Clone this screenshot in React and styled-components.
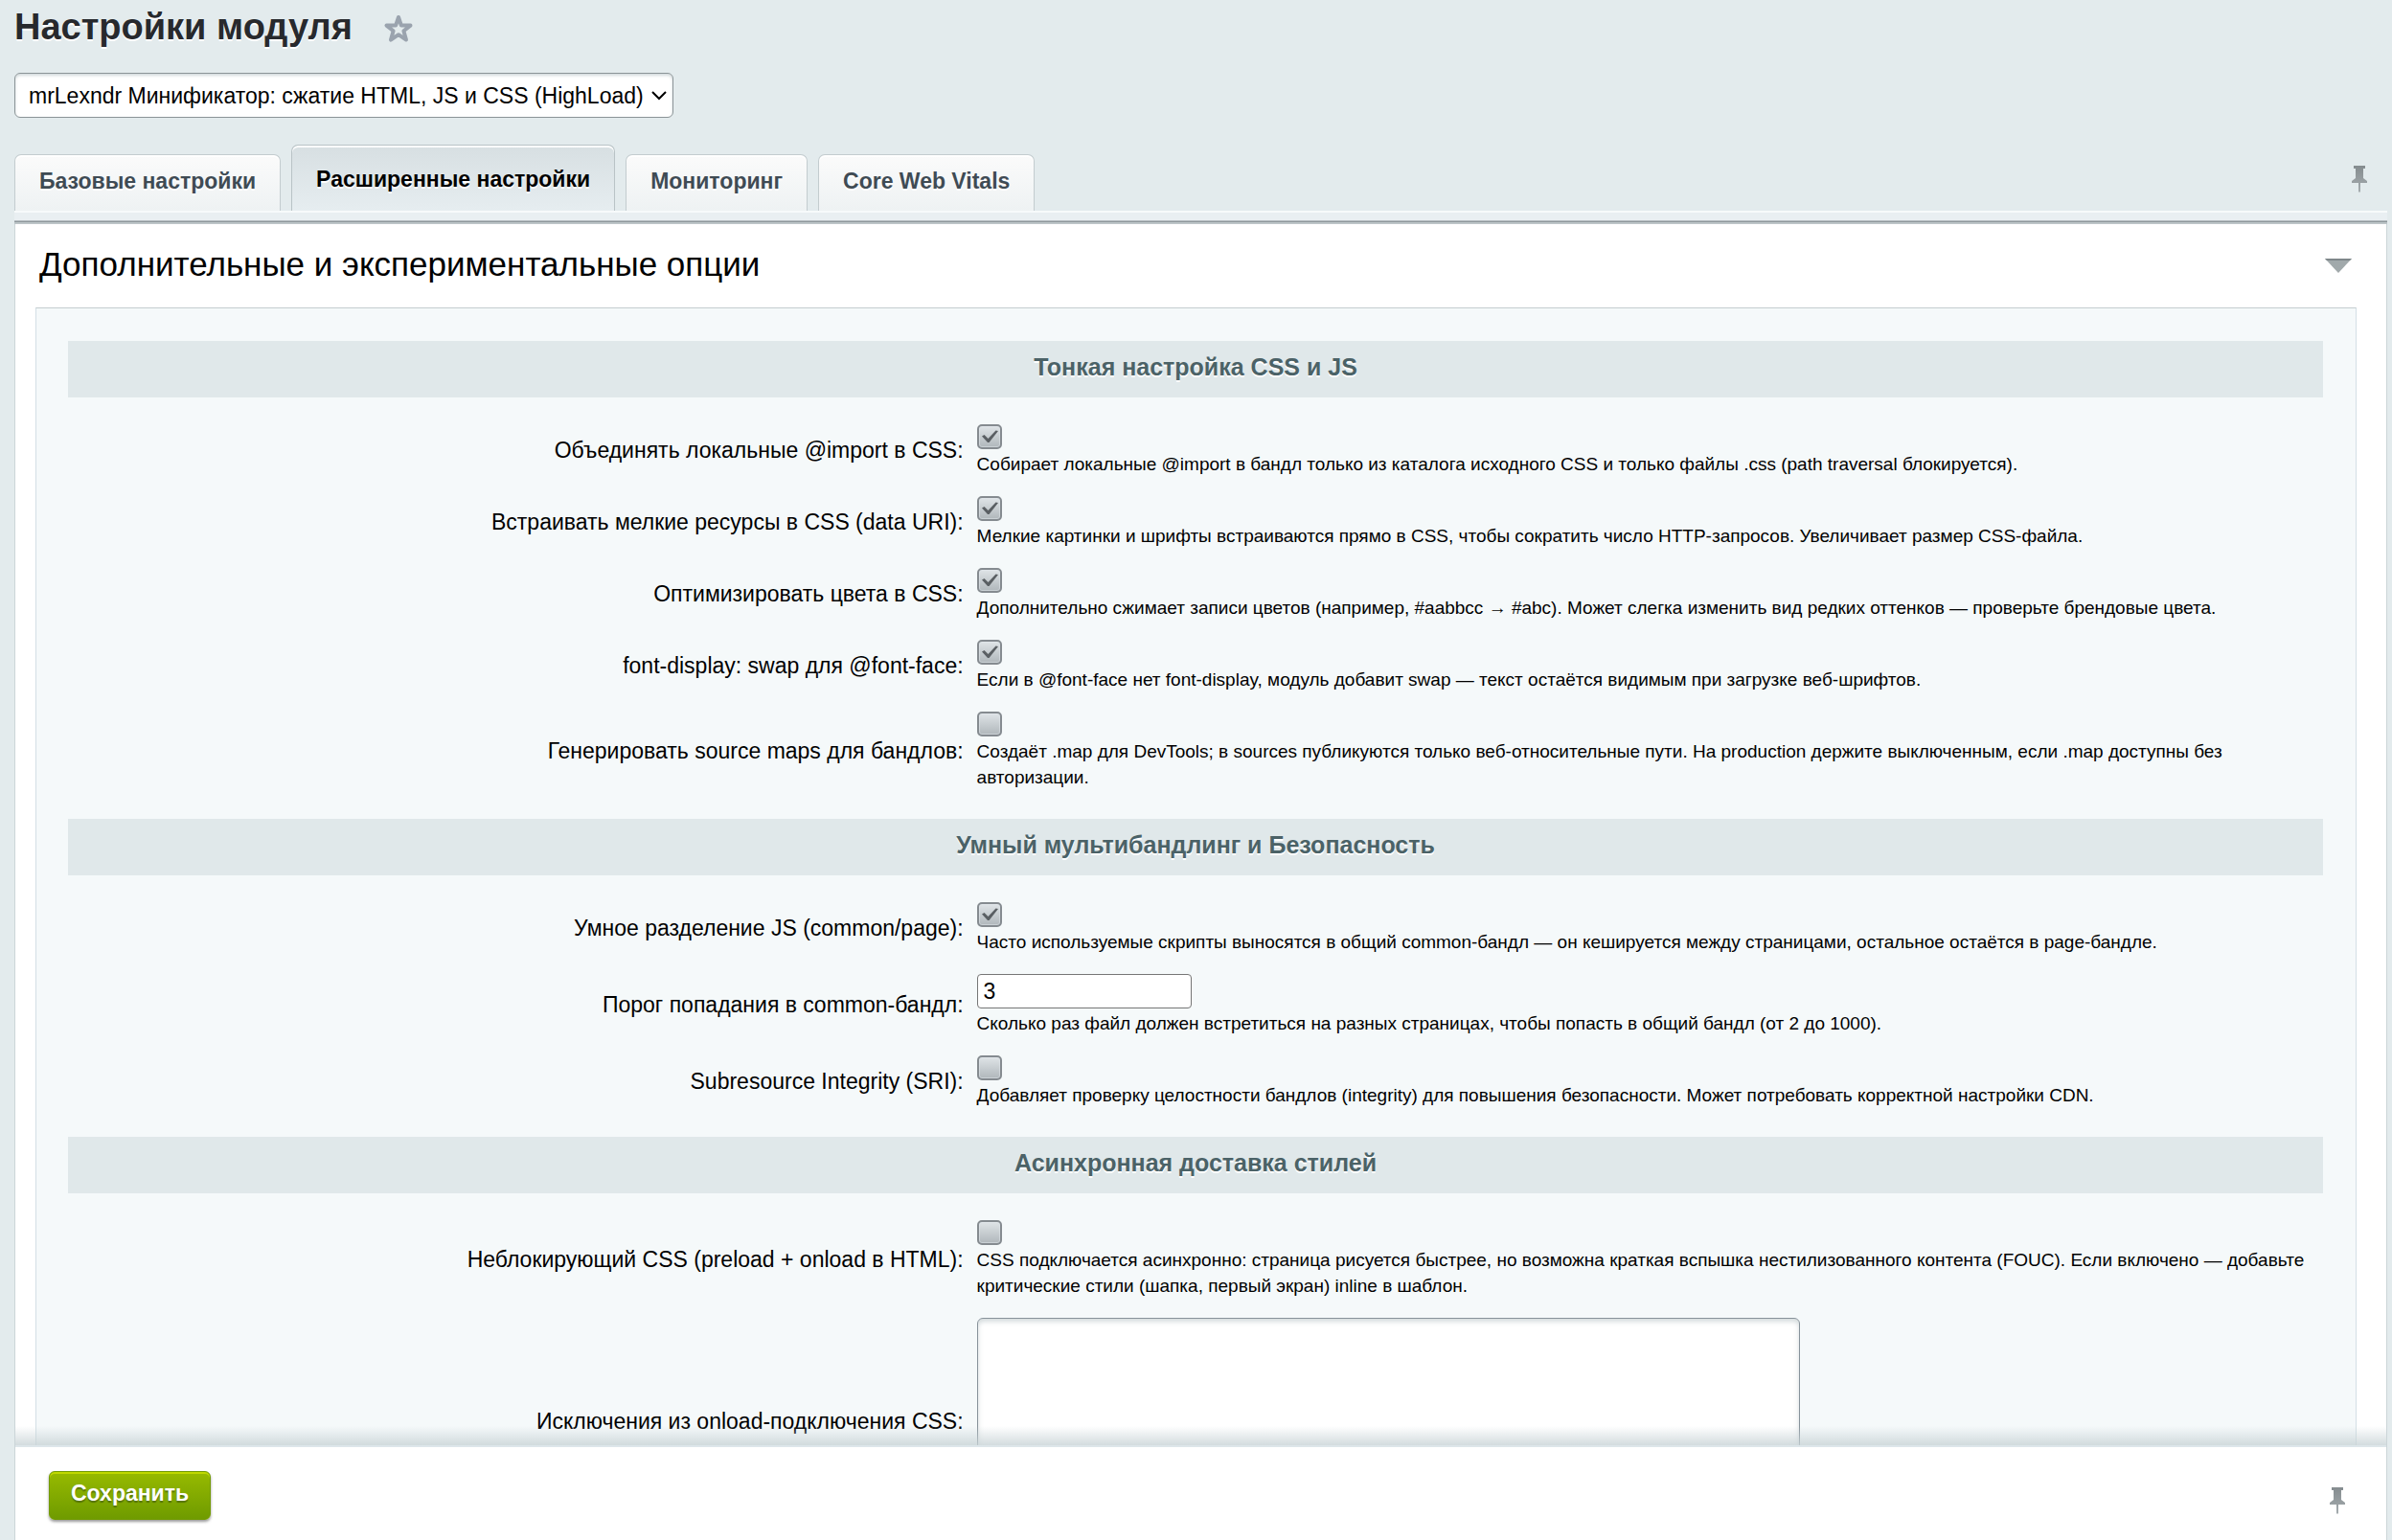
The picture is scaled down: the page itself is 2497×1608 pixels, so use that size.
import React, { useState } from 'react';
import styled, { createGlobalStyle } from 'styled-components';

const GlobalStyle = createGlobalStyle`
* {
  box-sizing: border-box;
}
body {
  margin: 0;
  background: #e3ebed;
  color: #000;
  font-family: "Liberation Sans", Arial, sans-serif;
  font-size: 23px;
}
button, input, select, textarea {
  font-family: inherit;
  font-size: inherit;
}
`

const Page = styled.div`
  display: flex;
  flex-direction: column;
  height: 100vh;
  overflow: hidden;
  padding: 0 5px 0 15px;
`

const TitleRow = styled.header`
  display: flex;
  align-items: center;
  gap: 32px;
  height: 56px;
  flex: none;
`

const Title = styled.h1`
  margin: 0;
  font-size: 38px;
  line-height: 56px;
  color: #27292d;
  text-shadow: 0 2px 0 #fff;
`

const IconButton = styled.button`
  display: flex;
  padding: 0;
  border: 0;
  background: none;
`

const StarButton = styled(IconButton)`
  padding-top: 4px;
`

const ModuleSelect = styled.div`
  display: grid;
  align-items: center;
  width: max-content;
  margin-top: 20px;
  flex: none;

  select, svg {
    grid-area: 1 / 1;
  }
  svg {
    justify-self: end;
    margin-right: 6px;
    pointer-events: none;
  }
  select {
    appearance: none;
    height: 47px;
    padding: 0 30px 0 14px;
    border: 1px solid #8b9497;
    border-radius: 6px;
    background: #fff;
    box-shadow: inset 0 2px 3px rgba(130, 150, 155, 0.35);
    color: #000;
  }
`

const TabsRow = styled.div`
  display: flex;
  align-items: flex-end;
  gap: 11px;
  height: 70px;
  margin-top: 27px;
  flex: none;
`

const Tab = styled.button`
  height: ${props => props.$active ? 69 : 59}px;
  padding: ${props => props.$active ? '2px 25px 0' : '0 25px 4px'};
  border: 1px solid ${props => props.$active ? '#b9c3c6' : '#c3cccf'};
  border-bottom: 0;
  border-radius: 7px 7px 0 0;
  background: ${props => props.$active
    ? 'linear-gradient(#d7dfe2, #e6edf0)'
    : 'linear-gradient(#fbfbfb, #eef2f3)'};
  box-shadow: inset 0 2px 0 #fff;
  color: ${props => props.$active ? '#000' : '#3f4b54'};
  font-weight: bold;
  text-shadow: 0 2px 0 #fff;
`

const TabsPin = styled.div`
  margin-left: auto;
  padding: 0 20px 18px 0;
`

const TabsLine = styled.div`
  height: 14px;
  flex: none;
  border-top: 2px solid #f7fafb;
  background: linear-gradient(#e9eff2 8px, #b4bcc0 8px, #b4bcc0 9px, #8f989c 9px, #8f989c 10px, #bcc4c7 10px);
`

const Card = styled.main`
  flex: 1;
  min-height: 0;
  overflow: hidden;
  padding: 0 31px 0 21px;
  border: solid #cbd5d8;
  border-width: 0 1px;
  background: #fff;
`

const CardHead = styled.div`
  display: flex;
  align-items: center;
  justify-content: space-between;
  height: 87px;
  padding: 0 5px 0 4px;
`

const CardTitle = styled.h2`
  margin: 0;
  padding-bottom: 3px;
  font-size: 35px;
  font-weight: normal;
`

const Panel = styled.form`
  padding: 34px 34px 0 33px;
  border: 1px solid #d3dfe5;
  border-top-color: #c4cdd0;
  background: #f5f9fa;
`

const Section = styled.section`
  & + & {
    margin-top: 21px;
  }
`

const SectionTitle = styled.h3`
  height: 59px;
  margin: 0 0 17px;
  background: #e0e8ea;
  color: #4b6267;
  font-size: 25px;
  line-height: 54px;
  text-align: center;
  text-shadow: 0 2px 0 #fff;
`

const Row = styled.div`
  display: grid;
  grid-template-columns: 2fr 3fr;
  align-items: center;
  padding: 11px 0 9px;
`

const Label = styled.label`
  padding-right: 7px;
  text-align: right;
`

const Field = styled.div`
  display: flex;
  flex-direction: column;
  align-items: flex-start;
  gap: 2px;
  padding: 0 7px;
`

const Note = styled.small`
  font-size: 19px;
  line-height: 27px;
`

const CheckWrap = styled.span`
  display: grid;

  input, svg {
    grid-area: 1 / 1;
  }
  svg {
    pointer-events: none;
  }
  input {
    appearance: none;
    width: 26px;
    height: 26px;
    margin: 0;
    border: 2px solid #858b90;
    border-radius: 5px;
    background: linear-gradient(#dfe4e7, #b0b7bb);
    box-shadow: inset 0 0 0 1px rgba(225, 232, 235, 0.5);
  }
`

const NumberInput = styled.input`
  width: 224px;
  height: 36px;
  padding: 0 6px;
  border: 1px solid #767676;
  border-radius: 4px;
  background: #fff;
`

const TextArea = styled.textarea`
  width: 859px;
  max-width: 100%;
  height: 216px;
  border: 1px solid #87929a;
  border-radius: 6px;
  background: #fff;
  box-shadow: inset 0 3px 5px rgba(130, 150, 155, 0.35);
  resize: none;
`

const Footer = styled.footer`
  position: relative;
  display: flex;
  align-items: flex-start;
  justify-content: space-between;
  height: 97px;
  flex: none;
  padding: 25px 42px 0 35px;
  border: solid #cbd5d8;
  border-width: 0 1px;
  background: #fff;

  &::before {
    content: "";
    position: absolute;
    left: 0;
    right: 0;
    bottom: 100%;
    height: 20px;
    border-bottom: 2px solid #dde6ea;
    background: linear-gradient(rgba(200, 211, 214, 0), rgba(200, 211, 214, 0.8));
    pointer-events: none;
  }
`

const SaveButton = styled.button`
  height: 51px;
  padding: 0 22px 4px;
  border: 1px solid #739a04;
  border-radius: 6px;
  background: linear-gradient(#97ba00, #6f9b00);
  box-shadow: inset 0 2px 0 #bfd800, 0 2px 3px rgba(0, 0, 0, 0.4);
  color: #fff;
  font-weight: bold;
  text-shadow: 0 2px 1px rgba(70, 95, 0, 0.7);
`

const FooterPin = styled.div`
  padding-top: 16px;
`

const sections = [
  {
    title: 'Тонкая настройка CSS и JS',
    rows: [
      { id: 'css_import', label: 'Объединять локальные @import в CSS:', type: 'checkbox', value: true, note: 'Собирает локальные @import в бандл только из каталога исходного CSS и только файлы .css (path traversal блокируется).' },
      { id: 'css_data_uri', label: 'Встраивать мелкие ресурсы в CSS (data URI):', type: 'checkbox', value: true, note: 'Мелкие картинки и шрифты встраиваются прямо в CSS, чтобы сократить число HTTP-запросов. Увеличивает размер CSS-файла.' },
      { id: 'css_colors', label: 'Оптимизировать цвета в CSS:', type: 'checkbox', value: true, note: 'Дополнительно сжимает записи цветов (например, #aabbcc → #abc). Может слегка изменить вид редких оттенков — проверьте брендовые цвета.' },
      { id: 'font_display', label: 'font-display: swap для @font-face:', type: 'checkbox', value: true, note: 'Если в @font-face нет font-display, модуль добавит swap — текст остаётся видимым при загрузке веб-шрифтов.' },
      { id: 'source_maps', label: 'Генерировать source maps для бандлов:', type: 'checkbox', value: false, note: 'Создаёт .map для DevTools; в sources публикуются только веб-относительные пути. На production держите выключенным, если .map доступны без авторизации.' },
    ],
  },
  {
    title: 'Умный мультибандлинг и Безопасность',
    rows: [
      { id: 'js_split', label: 'Умное разделение JS (common/page):', type: 'checkbox', value: true, note: 'Часто используемые скрипты выносятся в общий common-бандл — он кешируется между страницами, остальное остаётся в page-бандле.' },
      { id: 'common_limit', label: 'Порог попадания в common-бандл:', type: 'text', value: '3', note: 'Сколько раз файл должен встретиться на разных страницах, чтобы попасть в общий бандл (от 2 до 1000).' },
      { id: 'sri', label: 'Subresource Integrity (SRI):', type: 'checkbox', value: false, note: 'Добавляет проверку целостности бандлов (integrity) для повышения безопасности. Может потребовать корректной настройки CDN.' },
    ],
  },
  {
    title: 'Асинхронная доставка стилей',
    rows: [
      { id: 'css_async', label: 'Неблокирующий CSS (preload + onload в HTML):', type: 'checkbox', value: false, note: 'CSS подключается асинхронно: страница рисуется быстрее, но возможна краткая вспышка нестилизованного контента (FOUC). Если включено — добавьте критические стили (шапка, первый экран) inline в шаблон.' },
      { id: 'css_exclude', label: 'Исключения из onload-подключения CSS:', type: 'textarea', value: '' },
    ],
  },
]

const tabs = ['Базовые настройки', 'Расширенные настройки', 'Мониторинг', 'Core Web Vitals']

const StarIcon = () => (
  <svg width="32" height="32" viewBox="0 0 32 32" fill="none" stroke="#9aa3ae" strokeWidth="4" strokeLinejoin="round">
    <path d="M16 4 L18.8 12.4 L28.5 12.6 L21.4 18.3 L24 27.6 L16 22.2 L8 27.6 L10.6 18.3 L3.5 12.6 L13.2 12.4 Z" />
  </svg>
)

const PinIcon = () => (
  <svg width="18" height="30" viewBox="0 0 18 30">
    <defs>
      <linearGradient id="pin" x1="0" y1="0" x2="0" y2="1">
        <stop offset="0" stopColor="#858c8f" />
        <stop offset="1" stopColor="#a5acaf" />
      </linearGradient>
    </defs>
    <path fill="url(#pin)" d="M3 1h12v3h-2v10l4 3v2h-7v9.500h-2V19H1v-2l4-3V4H3z" />
  </svg>
)

const ArrowIcon = () => (
  <svg width="28" height="15" viewBox="0 0 28 15">
    <path fill="#a1a9ab" d="M0 0h28L14 15z" />
    <path fill="#7f878a" d="M0 0h28l-2 2H2z" />
  </svg>
)

const Checkbox = ({ id, value }) => {
  const [checked, setChecked] = useState(value)
  return (
    <CheckWrap>
      <input id={id} type="checkbox" checked={checked} onChange={e => setChecked(e.target.checked)} />
      {checked && (
        <svg width="26" height="26" viewBox="0 0 26 26">
          <path fill="#5a5f63" d="M5 12.500L7.500 11l4 4L19.500 6.500l2.500.5L12.500 19h-1.500z" />
        </svg>
      )}
    </CheckWrap>
  )
}

const Control = ({ row }) => {
  if (row.type === 'checkbox') return <Checkbox id={row.id} value={row.value} />
  if (row.type === 'textarea') return <TextArea id={row.id} defaultValue={row.value} />
  return <NumberInput id={row.id} type="text" defaultValue={row.value} />
}

const App = () => {
  const [active, setActive] = useState(1)

  return (
    <Page>
      <GlobalStyle />
      <TitleRow>
        <Title>Настройки модуля</Title>
        <StarButton type="button" aria-label="Добавить в избранное"><StarIcon /></StarButton>
      </TitleRow>

      <ModuleSelect>
        <select aria-label="Модуль">
          <option>mrLexndr Минификатор: сжатие HTML, JS и CSS (HighLoad)</option>
        </select>
        <svg width="18" height="12" viewBox="0 0 18 12" fill="none" stroke="#000" strokeWidth="2">
          <path d="M2 2l7 7 7-7" />
        </svg>
      </ModuleSelect>

      <TabsRow role="tablist">
        {tabs.map((tab, i) => (
          <Tab key={tab} type="button" role="tab" aria-selected={i === active} $active={i === active} onClick={() => setActive(i)}>
            {tab}
          </Tab>
        ))}
        <TabsPin>
          <IconButton type="button" aria-label="Закрепить вкладки"><PinIcon /></IconButton>
        </TabsPin>
      </TabsRow>
      <TabsLine />

      <Card>
        <CardHead>
          <CardTitle>Дополнительные и экспериментальные опции</CardTitle>
          <IconButton type="button" aria-label="Свернуть"><ArrowIcon /></IconButton>
        </CardHead>
        <Panel id="settings">
          {sections.map(section => (
            <Section key={section.title}>
              <SectionTitle>{section.title}</SectionTitle>
              {section.rows.map(row => (
                <Row key={row.id}>
                  <Label htmlFor={row.id}>{row.label}</Label>
                  <Field>
                    <Control row={row} />
                    {row.note && <Note>{row.note}</Note>}
                  </Field>
                </Row>
              ))}
            </Section>
          ))}
        </Panel>
      </Card>

      <Footer>
        <SaveButton type="submit" form="settings">Сохранить</SaveButton>
        <FooterPin>
          <IconButton type="button" aria-label="Закрепить панель"><PinIcon /></IconButton>
        </FooterPin>
      </Footer>
    </Page>
  );
};

export default App;
